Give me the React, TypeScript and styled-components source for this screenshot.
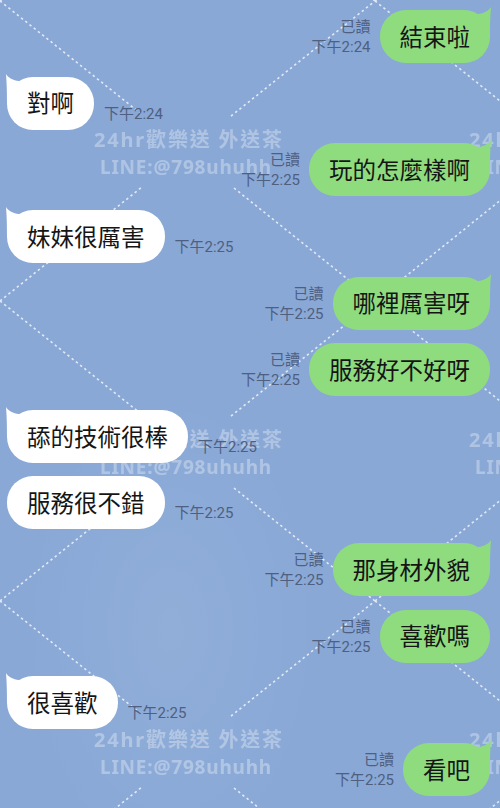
import * as React from "react";
import styled, { createGlobalStyle } from "styled-components";

type Message = {
  mine: boolean;
  text: string;
  time: string;
};

const messages: Message[] = [
  { mine: true, text: "結束啦", time: "下午2:24" },
  { mine: false, text: "對啊", time: "下午2:24" },
  { mine: true, text: "玩的怎麼樣啊", time: "下午2:25" },
  { mine: false, text: "妹妹很厲害", time: "下午2:25" },
  { mine: true, text: "哪裡厲害呀", time: "下午2:25" },
  { mine: true, text: "服務好不好呀", time: "下午2:25" },
  { mine: false, text: "舔的技術很棒", time: "下午2:25" },
  { mine: false, text: "服務很不錯", time: "下午2:25" },
  { mine: true, text: "那身材外貌", time: "下午2:25" },
  { mine: true, text: "喜歡嗎", time: "下午2:25" },
  { mine: false, text: "很喜歡", time: "下午2:25" },
  { mine: true, text: "看吧", time: "下午2:25" },
];

const SENT = "#8fdc7f";
const RECEIVED = "#ffffff";

const Tail: React.FunctionComponent<{ mine: boolean }> = ({ mine }) => (
  <TailShape $mine={mine} width="14" height="30" viewBox="0 0 14 30">
    <path
      d="M0 7 C6 6.5 10.5 4 13 0 C12.4 8 12 14 12 30 L0 30 Z"
      fill={mine ? SENT : RECEIVED}
    />
  </TailShape>
);

// watermark tiles: dotted X across each 375x300 cell, text in the middle
const Watermark: React.FunctionComponent = () => (
  <Backdrop xmlns="http://www.w3.org/2000/svg">
    <defs>
      <radialGradient id="cloud" cx="0.34" cy="0.78" r="0.3">
        <stop offset="0" stopColor="#ffffff" stopOpacity="0.07" />
        <stop offset="1" stopColor="#ffffff" stopOpacity="0" />
      </radialGradient>
      <pattern
        id="wm"
        width="375"
        height="300"
        patternUnits="userSpaceOnUse"
        x="0"
        y="1"
      >
        <g
          stroke="#ffffff"
          strokeOpacity="0.75"
          strokeWidth="1.6"
          strokeDasharray="2.4 3"
          fill="none"
        >
          <line x1="0" y1="0" x2="140" y2="112" />
          <line x1="234" y1="187" x2="375" y2="300" />
          <line x1="0" y1="300" x2="142" y2="186" />
          <line x1="231" y1="115" x2="375" y2="0" />
        </g>
        <WatermarkText x="189" y="146" textAnchor="middle" $size={20} $spacing={1.8}>
          24hr歡樂送 外送茶
        </WatermarkText>
        <WatermarkText x="186" y="173" textAnchor="middle" $size={19} $spacing={0.8}>
          LINE:@798uhuhh
        </WatermarkText>
      </pattern>
    </defs>
    <rect width="100%" height="100%" fill="url(#cloud)" />
    <rect width="100%" height="100%" fill="url(#wm)" />
  </Backdrop>
);

const App: React.FunctionComponent = () => {
  return (
    <Screen>
      <GlobalStyle />
      <Watermark />
      <ChatList>
        {messages.map((m, i) => {
          const first = i === 0 || messages[i - 1].mine !== m.mine;
          return (
            <Row key={i} $mine={m.mine}>
              <Bubble $mine={m.mine}>
                {first && <Tail mine={m.mine} />}
                <BubbleText>{m.text}</BubbleText>
              </Bubble>
              <Meta $mine={m.mine}>
                {m.mine && <span>已讀</span>}
                <span>{m.time}</span>
              </Meta>
            </Row>
          );
        })}
      </ChatList>
    </Screen>
  );
};

export default App;

const GlobalStyle = createGlobalStyle`
  html, body {
    margin: 0;
    padding: 0;
    background: #89a8d6;
  }
`;

const Screen = styled.div`
  position: relative;
  width: 100%;
  height: 808px;
  overflow: hidden;
  background: #89a8d6;
`;

const Backdrop = styled.svg`
  position: absolute;
  inset: 0;
  width: 100%;
  height: 100%;
`;

const WatermarkText = styled.text<{ $size: number; $spacing: number }>`
  font-family: "Noto Sans", "Noto Sans CJK TC", sans-serif;
  font-weight: 700;
  font-size: ${({ $size }) => $size}px;
  letter-spacing: ${({ $spacing }) => $spacing}px;
  fill: #ffffff;
  fill-opacity: 0.32;
`;

const ChatList = styled.div`
  position: relative;
  display: flex;
  flex-direction: column;
  gap: 13.64px;
  padding: 10px 10px 0 7px;
`;

const Row = styled.div<{ $mine: boolean }>`
  display: flex;
  flex-direction: ${({ $mine }) => ($mine ? "row-reverse" : "row")};
  align-items: flex-end;
  gap: ${({ $mine }) => ($mine ? "9px" : "10px")};
`;

const Bubble = styled.div<{ $mine: boolean }>`
  position: relative;
  display: flex;
  align-items: center;
  height: 53px;
  padding: 0 20px;
  border-radius: 26px;
  background: ${({ $mine }) => ($mine ? SENT : RECEIVED)};
`;

const BubbleText = styled.span`
  position: relative;
  font-family: "Noto Sans CJK TC", sans-serif;
  font-size: 23.5px;
  line-height: 1;
  color: #151515;
  white-space: nowrap;
`;

const TailShape = styled.svg<{ $mine: boolean }>`
  position: absolute;
  top: -3px;
  ${({ $mine }) => ($mine ? "right: -2px;" : "left: -2px; transform: scaleX(-1);")}
`;

const Meta = styled.div<{ $mine: boolean }>`
  display: flex;
  flex-direction: column;
  align-items: ${({ $mine }) => ($mine ? "flex-end" : "flex-start")};
  padding-bottom: 6px;
  font-family: Roboto, "Noto Sans CJK TC", sans-serif;
  font-size: 15px;
  line-height: 20px;
  color: #4f5f80;
  white-space: nowrap;
`;
